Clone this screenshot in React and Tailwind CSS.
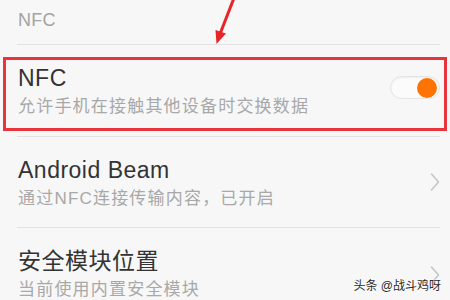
const font = { fontFamily: '"Liberation Sans", "Noto Sans CJK SC", sans-serif' };

function Chevron() {
  return (
    <svg width="10" height="20" viewBox="0 0 10 20" className="shrink-0">
      <path d="M1.5 2 L8.5 10 L1.5 18" fill="none" stroke="#c4c4c4" strokeWidth="1.5" strokeLinecap="round" strokeLinejoin="round" />
    </svg>
  );
}

function Toggle() {
  return (
    <div className="relative w-[50px] h-[23px] rounded-full border border-[#e4e4e4] bg-[#fbfbfb] shadow-[inset_0_1px_2px_rgba(0,0,0,0.06)] shrink-0">
      <div className="absolute right-[2px] top-[1px] w-[20px] h-[20px] rounded-full bg-[#ff7400]" />
    </div>
  );
}

function Row({ title, sub, right, height, children }) {
  return (
    <>
      <div className={`relative flex items-center pl-[18px] pr-[10px] ${height}`}>
        <div className="flex-1 min-w-0 pt-[1px]">
          <p className="text-[23px] leading-[28px] tracking-[0.5px] text-[#333333]">{title}</p>
          <p className="mt-[4px] text-[17px] leading-[22px] tracking-[1.2px] text-[#a8a8a8] whitespace-nowrap">{sub}</p>
        </div>
        {right}
        {children}
      </div>
      <div className="ml-[17px] mr-[10px] h-px bg-[#e2e2e2]" />
    </>
  );
}

export default function App() {
  return (
    <div className="relative w-[450px] h-[300px] overflow-hidden bg-[#f7f7f7]" style={font}>
      {/* section header */}
      <div className="h-[44px] pl-[18px] pt-[8px]">
        <p className="text-[18px] leading-[24px] tracking-[0.3px] text-[#a3a3a3]">NFC</p>
      </div>
      <div className="ml-[17px] mr-[10px] h-px bg-[#e2e2e2]" />

      <Row
        title="NFC"
        sub="允许手机在接触其他设备时交换数据"
        height="h-[91px]"
        right={<div className="self-start mt-[31px]"><Toggle /></div>}
      >
        {/* red highlight box */}
        <div className="absolute left-[3px] right-[3px] top-[12px] h-[74px] border-[3px] border-[#e8353d] pointer-events-none" />
      </Row>

      <Row title="Android Beam" sub="通过NFC连接传输内容，已开启" height="h-[90px]" right={<Chevron />} />

      <Row title="安全模块位置" sub="当前使用内置安全模块" height="h-[90px]" right={<div className="self-start mt-[37px]"><Chevron /></div>} />

      {/* red arrow */}
      <svg className="absolute left-0 top-0 pointer-events-none" width="450" height="50" viewBox="0 0 450 50">
        <line x1="234" y1="-2" x2="220" y2="34" stroke="#e8232a" strokeWidth="3" />
        <polygon points="216.5,44 226,33.5 215.5,30" fill="#e8232a" />
      </svg>

      {/* watermark */}
      <div className="absolute right-[9px] top-[279px] text-[12px] leading-[14px] text-[#2a2a2a] [text-shadow:0_0_2px_#fff,0_0_2px_#fff]">
        头条 @战斗鸡呀
      </div>
    </div>
  );
}
